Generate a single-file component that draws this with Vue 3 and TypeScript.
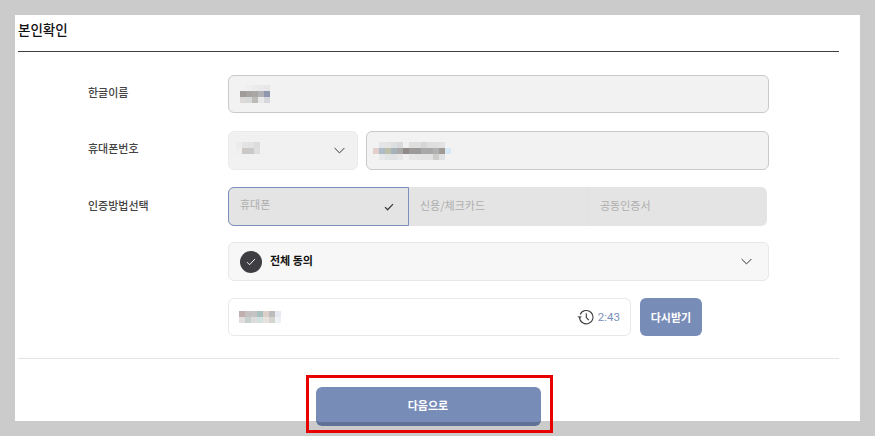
<script setup lang="ts">
const nameBlur = [
  ['#f2f2f2', '#efefef', '#ebebeb', '#e9e9eb', '#e7e7e9'],
  ['#a09a98', '#a6a3a1', '#aaa8a6', '#b2b2b4', '#8e97ae'],
  ['#dbdad8', '#d6d9d8', '#bdbbb7', '#e8e8e8', '#d5d7da'],
]
const carrierBlur = [
  ['#ececec', '#e4e4e4', '#e2e2e2', '#dcdcdc'],
  ['#efefef', '#ccc8c5', '#c9c9c9', '#dcdee0'],
]
const phoneBlur = [
  ['#f2f2f2', '#e2e6e8', '#e4e4e4', '#dcdfe0', '#d8d8d8', '#f0f0f0', '#dedede', '#dedede', '#d6d6d6', '#dedede', '#dedede', '#e2e2e2', '#f2f2f2'],
  ['#e2cfcc', '#adbcc6', '#bcc0a8', '#a5b2ba', '#a8a9a8', '#8f8a88', '#9d9b9a', '#9a9a9a', '#a9a9a9', '#a8a8a8', '#b0b2b2', '#a09a94', '#d8e8f4'],
  ['#f2f2f2', '#e6e8e9', '#e0e4e4', '#dfe2e3', '#e6e6e6', '#f0f0f0', '#e6e6e6', '#e4e4e4', '#e2e2e2', '#e2e2e2', '#cfcdca', '#dfe1e3', '#f2f2f2'],
]
const codeBlur = [
  ['#bfafaf', '#c6c0c0', '#c4c4c4', '#a9c0c0', '#dcd0c8', '#bcbcbc', '#e6eaf0'],
  ['#e2dede', '#c4d0d0', '#dcdcdc', '#d2e0e0', '#e6e2de', '#d4d4d0', '#eef2f6'],
]
const methods = ['휴대폰', '신용/체크카드', '공동인증서']
</script>

<template>
  <div class="page">
    <div class="panel">
      <h2 class="title">본인확인</h2>

      <div class="form">
        <div class="row row-name">
          <label class="label">한글이름</label>
          <div class="input">
            <div class="blur">
              <div v-for="(line, i) in nameBlur" :key="i" class="blur-line">
                <i v-for="(c, j) in line" :key="j" :style="{ background: c }"></i>
              </div>
            </div>
          </div>
        </div>

        <div class="row">
          <label class="label">휴대폰번호</label>
          <div class="select">
            <div class="blur blur-carrier">
              <div v-for="(line, i) in carrierBlur" :key="i" class="blur-line">
                <i v-for="(c, j) in line" :key="j" :style="{ background: c }"></i>
              </div>
            </div>
            <svg class="chevron" width="11" height="7" viewBox="0 0 11 7">
              <path d="M.6 1 5.5 5.9 10.4 1" fill="none" stroke="#333" stroke-width="1" />
            </svg>
          </div>
          <div class="input input-phone">
            <div class="blur">
              <div v-for="(line, i) in phoneBlur" :key="i" class="blur-line">
                <i v-for="(c, j) in line" :key="j" :style="{ background: c }"></i>
              </div>
            </div>
          </div>
        </div>

        <div class="row row-method">
          <label class="label label-method">인증방법선택</label>
          <div class="tabs">
            <div
              v-for="(m, i) in methods"
              :key="m"
              class="tab"
              :class="{ active: i === 0 }"
            >
              <span>{{ m }}</span>
              <svg v-if="i === 0" width="10" height="8" viewBox="0 0 12 10">
                <path d="M1 5.2 4.2 8.4 11 1.4" fill="none" stroke="#3e3e42" stroke-width="1.6" />
              </svg>
            </div>
          </div>
        </div>

        <div class="row row-agree">
          <span class="label"></span>
          <div class="agree">
            <span class="agree-check">
              <svg width="10" height="8" viewBox="0 0 12 10">
                <path d="M1 5.2 4.2 8.4 11 1.2" fill="none" stroke="#fff" stroke-width="1.2" />
              </svg>
            </span>
            <span class="agree-text">전체 동의</span>
            <svg class="chevron" width="11" height="7" viewBox="0 0 11 7">
              <path d="M.6 1 5.5 5.9 10.4 1" fill="none" stroke="#333" stroke-width="1" />
            </svg>
          </div>
        </div>

        <div class="row row-code">
          <span class="label"></span>
          <div class="code">
            <div class="blur">
              <div v-for="(line, i) in codeBlur" :key="i" class="blur-line">
                <i v-for="(c, j) in line" :key="j" :style="{ background: c }"></i>
              </div>
            </div>
            <svg class="clock" width="17" height="16" viewBox="0 0 17 16">
              <path d="M3.2 5.4A6.7 6.7 0 1 1 2.6 8.4" fill="none" stroke="#3e3e42" stroke-width="1.1" />
              <path d="M0.4 7.2 2.6 9.6 5 7.4Z" fill="#3e3e42" />
              <path d="M9.3 4.2V8.6L11.8 11" fill="none" stroke="#3e3e42" stroke-width="1.1" />
            </svg>
            <span class="timer">2:43</span>
          </div>
          <button class="resend" type="button">다시받기</button>
        </div>
      </div>

      <div class="footer">
        <button class="next" type="button">다음으로</button>
      </div>

      <div class="highlight"></div>
    </div>
  </div>
</template>

<style>
html,
body {
  margin: 0;
  background: #cbcbcb;
}
</style>

<style scoped>
.page {
  box-sizing: border-box;
  height: 436px;
  padding: 15px 0 0 15px;
  background: #cbcbcb;
}

.panel {
  position: relative;
  box-sizing: border-box;
  width: 845px;
  height: 406px;
  padding: 0 21px 0 3px;
  background: #fff;
  font-family: "Noto Sans CJK KR", "Noto Sans", sans-serif;
  color: #333;
}

.title {
  box-sizing: border-box;
  height: 37px;
  margin: 0;
  padding-top: 4px;
  border-bottom: 1px solid #3e3e42;
  font-size: 13.5px;
  font-weight: 500;
  line-height: 20px;
  color: #111;
}

.form {
  display: flex;
  flex-direction: column;
  gap: 17px;
  padding: 23px 0 22px 70px;
  border-bottom: 1px solid #e4e4e4;
}

.row {
  display: flex;
  align-items: center;
  height: 39px;
}

.row-name {
  height: 38px;
  margin-bottom: 1px;
}

.row-method {
  margin-bottom: -1px;
}

.row-code {
  height: 38px;
}

.label {
  flex: 0 0 140px;
  padding-bottom: 5px;
  font-size: 11px;
  font-weight: 500;
  color: #444;
}

.label-method {
  padding-bottom: 3px;
}

.input,
.select,
.agree,
.code {
  box-sizing: border-box;
  display: flex;
  align-items: center;
  height: 100%;
  border-radius: 6px;
}

.input {
  width: 541px;
  padding-left: 11px;
  border: 1px solid #c9c9c9;
  background: #f2f2f2;
}

.input-phone {
  width: 403px;
  margin-left: 8px;
  padding-left: 6px;
}

.select {
  justify-content: space-between;
  width: 130px;
  padding: 0 12px 0 7px;
  border: 1px solid #ebebeb;
  background: #f1f1f1;
}

.blur-carrier {
  margin-bottom: 5px;
}

.chevron {
  flex: none;
}

.blur {
  flex: none;
}

.blur-line {
  display: flex;
}

.blur-line i {
  display: block;
  width: 6px;
  height: 6px;
}

.tabs {
  display: flex;
  width: 539px;
  height: 100%;
  border-radius: 6px;
  background: #e4e4e4;
}

.tab {
  box-sizing: border-box;
  display: flex;
  align-items: center;
  justify-content: space-between;
  flex: 0 0 178px;
  padding: 0 14px 0 11px;
  font-size: 11px;
  color: #aeaeae;
}

.tab span {
  padding-bottom: 4px;
}

.tab + .tab + .tab {
  flex: 1;
  border-left: 1px solid #e0e0e0;
  padding-left: 12px;
}

.tab.active {
  flex-basis: 181px;
  border: 1px solid #7a8fbb;
  border-radius: 6px 0 0 6px;
  background: #e4e4e4;
}

.tab.active span {
  padding-bottom: 6px;
}

.agree {
  width: 541px;
  padding: 0 16px 0 11px;
  border: 1px solid #e8e8e8;
  background: #f7f7f7;
}

.agree-check {
  display: flex;
  align-items: center;
  justify-content: center;
  width: 22px;
  height: 22px;
  border-radius: 50%;
  background: #3e3e42;
}

.agree-text {
  flex: 1;
  margin-left: 8px;
  padding-bottom: 4px;
  font-size: 11px;
  font-weight: 700;
  color: #111;
}

.code {
  width: 403px;
  padding: 0 10px 0 10px;
  border: 1px solid #e8e8e8;
  background: #fff;
}

.clock {
  margin-left: auto;
}

.timer {
  margin-left: 4px;
  font-family: Roboto, "Noto Sans", sans-serif;
  font-size: 11.5px;
  color: #7a8fbb;
}

.resend {
  width: 62px;
  height: 38px;
  margin-left: 9px;
  padding: 0;
  border: none;
  border-radius: 6px;
  background: #788cb8;
  font-family: inherit;
  font-size: 11px;
  font-weight: 700;
  color: #fff;
}

.footer {
  display: flex;
  justify-content: center;
  padding-top: 28px;
  padding-right: 1px;
}

.next {
  box-sizing: border-box;
  width: 225px;
  height: 39px;
  padding: 0;
  border: none;
  border-bottom: 4px solid #5f7196;
  border-radius: 6px;
  background: #788cb8;
  font-family: inherit;
  font-size: 11px;
  font-weight: 700;
  color: #fff;
}

.highlight {
  position: absolute;
  left: 291px;
  top: 360px;
  box-sizing: border-box;
  width: 247px;
  height: 58px;
  border: 3px solid #e80000;
}
</style>
